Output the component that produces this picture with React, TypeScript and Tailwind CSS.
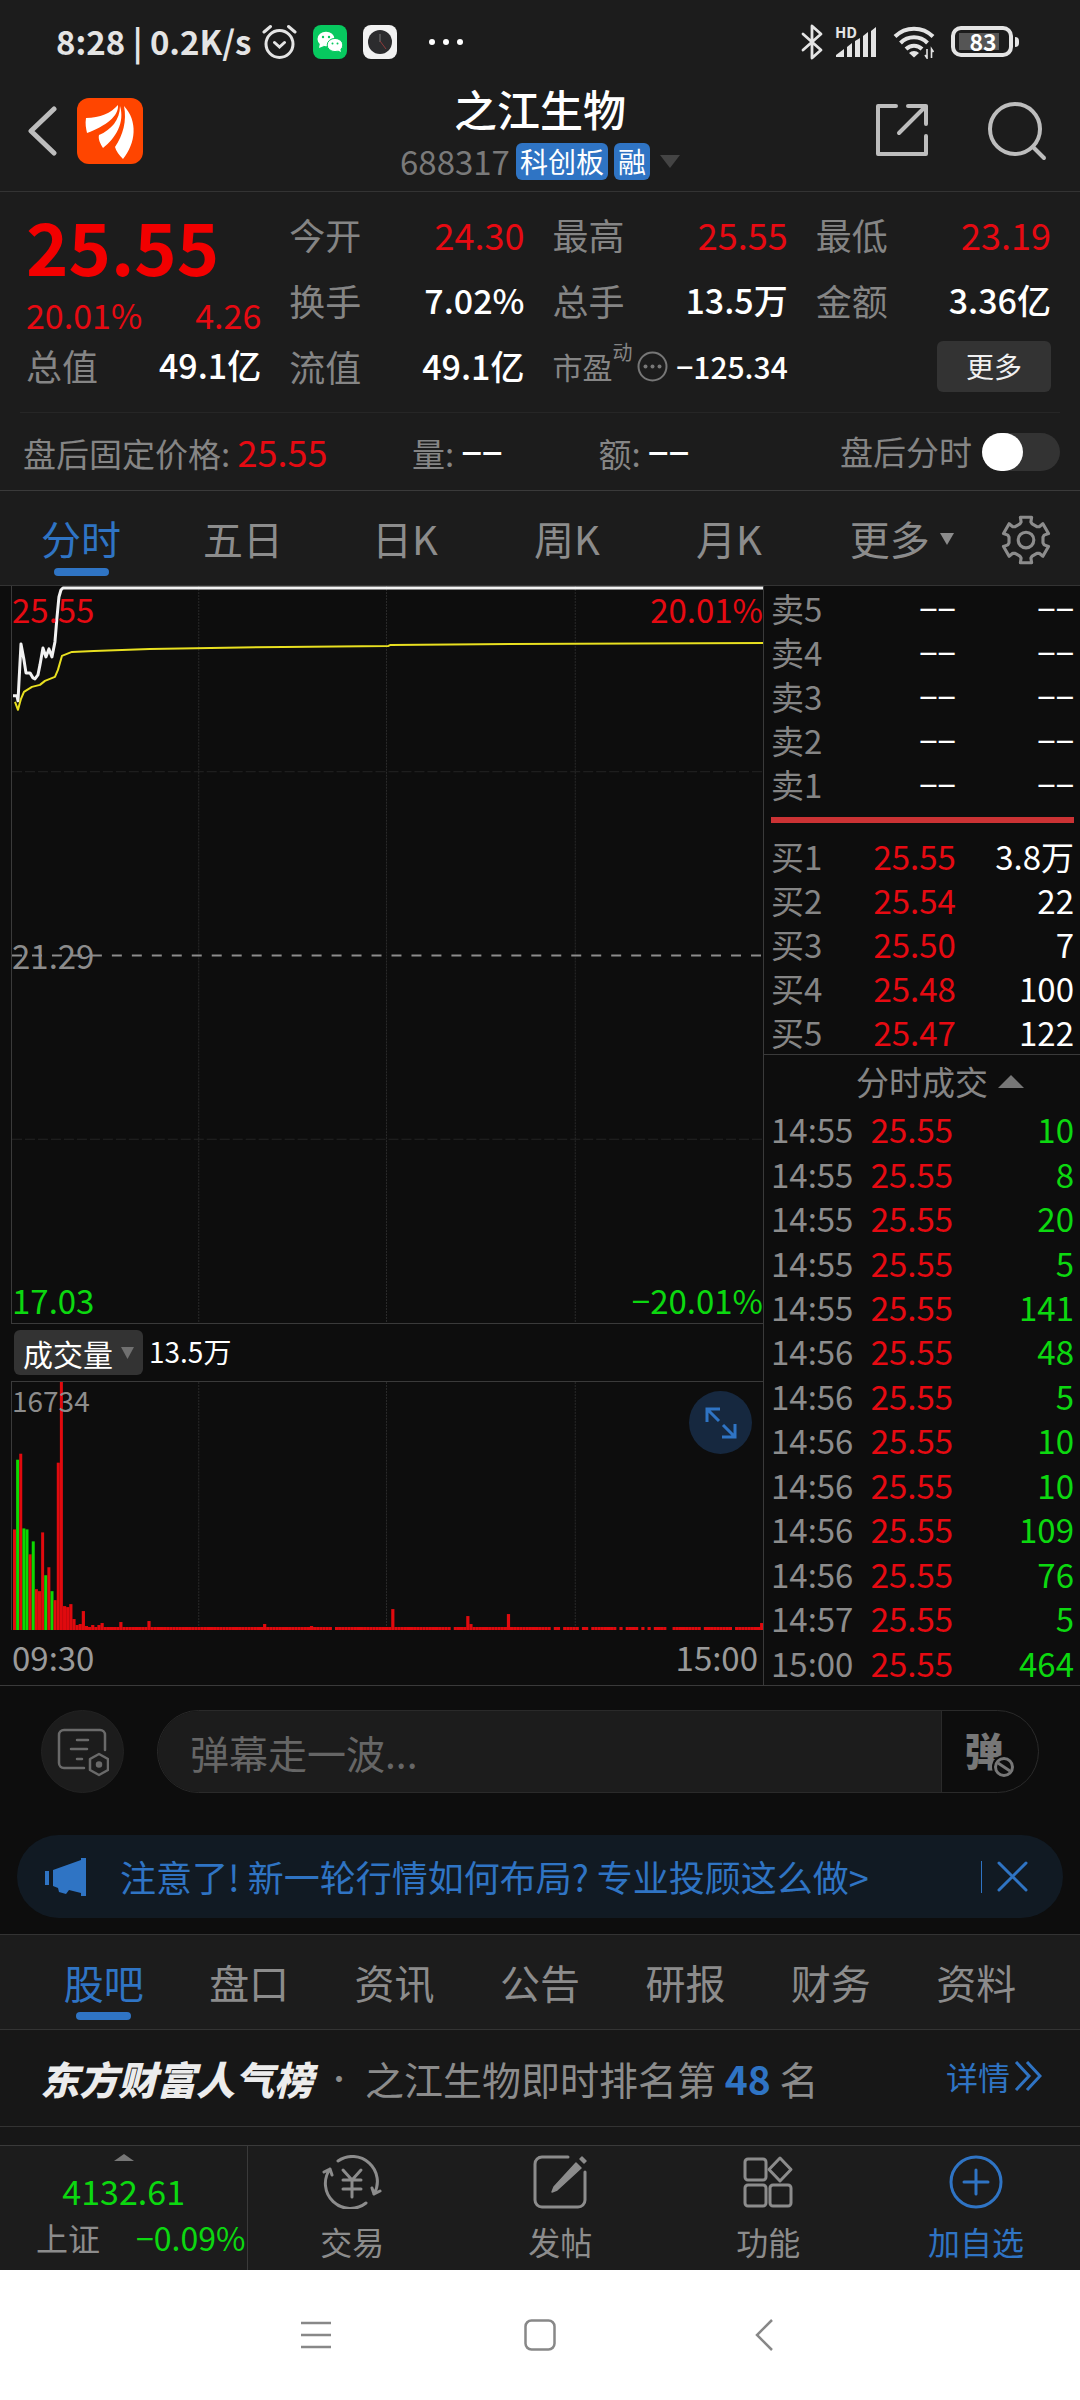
import React, { FC, ReactNode, useState } from "react";

type Tone = "red" | "green" | "white";

const toneClass: Record<Tone, string> = {
    red: "text-[#e60a12]",
    green: "text-[#0cd810]",
    white: "text-white"
};

const NONE = "−−";

const quotes: { label: string, value: string, tone: Tone }[] = [
    { label: "今开", value: "24.30", tone: "red" },
    { label: "最高", value: "25.55", tone: "red" },
    { label: "最低", value: "23.19", tone: "red" },
    { label: "换手", value: "7.02%", tone: "white" },
    { label: "总手", value: "13.5万", tone: "white" },
    { label: "金额", value: "3.36亿", tone: "white" },
    { label: "流值", value: "49.1亿", tone: "white" }
];

const periods = ["分时", "五日", "日K", "周K", "月K"];
const sections = ["股吧", "盘口", "资讯", "公告", "研报", "财务", "资料"];

interface Order {
    label: string
    price: string
    amount: string
}

const sells: Order[] = ["卖5", "卖4", "卖3", "卖2", "卖1"].map(label => ({ label, price: NONE, amount: NONE }));

const buys: Order[] = [
    { label: "买1", price: "25.55", amount: "3.8万" },
    { label: "买2", price: "25.54", amount: "22" },
    { label: "买3", price: "25.50", amount: "7" },
    { label: "买4", price: "25.48", amount: "100" },
    { label: "买5", price: "25.47", amount: "122" }
];

const trades: [string, number][] = [
    ["14:55", 10], ["14:55", 8], ["14:55", 20], ["14:55", 5], ["14:55", 141],
    ["14:56", 48], ["14:56", 5], ["14:56", 10], ["14:56", 10], ["14:56", 109], ["14:56", 76],
    ["14:57", 5], ["15:00", 464]
];

// minute volume bars, heights in chart units, anything not listed is the 3 unit floor
const openingBars = [
    101, 171, 177, 102, 101, 76, 89, 41, 39, 98, 55, 63, 39, 30, 168, 249,
    24, 23, 26, 11, 5, 6, 19, 4, 3, 5, 3, 5, 7
];
const fallingBars = [1, 3, 4, 6, 10, 12];
const laterBars: Record<number, number> = { 34: 8, 43: 9, 80: 6, 95: 4, 121: 21, 145: 14, 146: 6, 158: 16, 239: 7 };
const emptyBars = [102, 140, 172, 175, 181, 184, 193, 195, 200, 202, 204, 209, 210, 220, 230];

const StatusBar: FC = () => (
    <div className="flex h-[83px] items-center justify-between pl-14 pr-[61px] text-[#e4e4e4]">
        <div className="flex items-center">
            <span className="text-[33px] font-bold leading-none">8:28 | 0.2K/s</span>
            <svg className="ml-[11px] size-[35px]" viewBox="0 0 35 35" fill="none" stroke="currentColor" strokeWidth="3" strokeLinecap="round">
                <circle cx="17.500" cy="20" r="13.500" />
                <path d="M2 8 8.500 2.500M33 8 26.500 2.500M12.500 18.500l5 4.500 5-4.500" />
            </svg>
            <svg className="ml-4 size-[34px]" viewBox="0 0 34 34">
                <rect width="34" height="34" rx="8" fill="#07c95f" />
                <g fill="#fff">
                    <ellipse cx="13" cy="14" rx="8.500" ry="7.300" />
                    <path d="m7 18-1 5 5-2z" />
                    <ellipse cx="22" cy="20" rx="7.800" ry="6.600" stroke="#07c95f" strokeWidth="1" />
                    <path d="m24 25 4 2-1-4z" />
                </g>
                <g fill="#07c95f">
                    <circle cx="10" cy="12" r="1.200" />
                    <circle cx="16" cy="12" r="1.200" />
                    <circle cx="19.500" cy="18.500" r="1" />
                    <circle cx="24.500" cy="18.500" r="1" />
                </g>
            </svg>
            <svg className="ml-4 size-[34px]" viewBox="0 0 34 34" fill="none">
                <rect width="34" height="34" rx="8" fill="#f2f2f2" />
                <circle cx="17" cy="17" r="12" fill="#2c2c2e" />
                <path d="M17 9v8" stroke="#777" strokeWidth="1" />
                <path d="m17 16 6 8" stroke="#8d3b3b" strokeWidth="1" />
            </svg>
            <svg className="ml-8 h-2 w-[34px]" viewBox="0 0 34 8" fill="#fff">
                <circle cx="3" cy="4" r="3" />
                <circle cx="17" cy="4" r="3" />
                <circle cx="31" cy="4" r="3" />
            </svg>
        </div>
        <div className="flex items-center">
            <svg className="h-[36px] w-[22px]" viewBox="0 0 22 36" fill="none" stroke="currentColor" strokeWidth="2.800" strokeLinejoin="round" strokeLinecap="round">
                <path d="m2 10 18 16-9 8V2l9 8L2 26" />
            </svg>
            <div className="relative ml-3 h-8 w-[42px]">
                <svg className="size-full" viewBox="0 0 42 32" fill="currentColor">
                    <path d="M1 31v-2l8-6v8zM12 31V21l5-4v14zM20 31V15l5-3v19zM28 31V10l5-4v25zM36 31V5l5-4v30z" />
                </svg>
                <span className="absolute left-0 top-0 text-[15px] font-bold leading-3">HD</span>
            </div>
            <svg className="ml-4 h-[34px] w-[42px]" viewBox="0 0 42 34" fill="none" stroke="currentColor" strokeWidth="4">
                <path d="M2 11.500a27 27 0 0 1 38 0M7.500 18a19 19 0 0 1 27 0M13 24a11.500 11.500 0 0 1 16 0" />
                <path d="m16 28 5 4.500 5-4.500a7 7 0 0 0-10 0z" fill="currentColor" stroke="none" />
                <path d="M34 24v9l-2-3M38.500 33v-9l2 3" strokeWidth="1.600" />
            </svg>
            <div className="ml-4 flex items-center">
                <div className="flex h-[31px] w-[62px] items-center rounded-[10px] border-4 border-[#e4e4e4] px-1">
                    <div className="flex h-[17px] w-10 items-center justify-center bg-[#555]">
                        <span className="pl-2 text-[23px] font-bold leading-none text-white">83</span>
                    </div>
                </div>
                <div className="ml-[2px] h-[10px] w-1 rounded-r bg-[#e4e4e4]" />
            </div>
        </div>
    </div>
);

const Header: FC = () => (
    <header className="grid h-[109px] grid-cols-[1fr_auto_1fr] border-b border-[#333]">
        <div className="flex items-start pl-[26px] pt-[15px]">
            <button aria-label="返回" className="mt-2">
                <svg className="h-[50px] w-8" viewBox="0 0 32 50" fill="none" stroke="#bdbdbd" strokeWidth="5" strokeLinecap="round" strokeLinejoin="round">
                    <path d="M28 3 5 25l23 22" />
                </svg>
            </button>
            <svg className="ml-[19px] size-[66px]" viewBox="0 0 66 66">
                <rect width="66" height="66" rx="12" fill="#ff4500" />
                <g fill="#fff">
                    <path d="M9 20c14 0 25-5 32-13 1 11-12 21-31 28-1-5-2-9-1-15z" />
                    <path d="M43 8c5 16-4 32-17 42-3-5-5-9-4-13 12-5 21-15 21-29z" />
                    <path d="M47 8c14 15 12 37-1 53-4-4-7-8-8-12 8-12 12-26 9-41z" />
                </g>
            </svg>
        </div>
        <div className="flex flex-col items-center">
            <h1 className="text-[43px] font-medium leading-[50px] text-white">之江生物</h1>
            <button className="mt-[10px] flex h-[37px] items-center">
                <span className="text-[33px] leading-[37px] text-[#7a7a7a]">688317</span>
                <span className="ml-[6px] rounded-md bg-[#2f74c4] px-1 text-[28px] leading-[37px] text-white">科创板</span>
                <span className="ml-[6px] rounded-md bg-[#2f74c4] px-1 text-[28px] leading-[37px] text-white">融</span>
                <svg className="ml-[10px] h-[13px] w-5" viewBox="0 0 20 13" fill="#444"><path d="M0 0h20L10 13z" /></svg>
            </button>
        </div>
        <div className="flex items-start justify-end gap-[58px] pr-[33px] pt-[18px]">
            <button aria-label="分享" className="pt-[2px]">
                <svg className="size-[54px]" viewBox="0 0 54 54" fill="none" stroke="#bdbdbd" strokeWidth="4" strokeLinecap="round" strokeLinejoin="round">
                    <path d="M21 3H3v48h48V33M33 3h18v18M51 3 24 30" />
                </svg>
            </button>
            <button aria-label="搜索">
                <svg className="size-[60px]" viewBox="0 0 60 60" fill="none" stroke="#bdbdbd" strokeWidth="4" strokeLinecap="round">
                    <circle cx="28" cy="28" r="25" />
                    <path d="m46 46 11 11" />
                </svg>
            </button>
        </div>
    </header>
);

interface IQuoteCell {
    label: string
    value: string
    tone: Tone
}

const QuoteCell: FC<IQuoteCell> = ({ label, value, tone }) => (
    <div className="flex items-center justify-between">
        <span className="text-[#858585]">{label}</span>
        <span className={`${toneClass[tone]} ${tone === "white" ? "text-[34px] font-medium" : ""}`}>{value}</span>
    </div>
);

const QuotePanel: FC = () => (
    <section className="grid grid-cols-4 gap-x-7 pb-[13px] pl-[26px] pr-[29px] pt-[9px] text-[36px] leading-none">
        <div className="flex flex-col">
            <div className="flex h-[88px] items-center text-[72px] font-bold text-[#f20000]">25.55</div>
            <div className="flex h-[52px] items-center justify-between text-[34px] text-[#e60a12]">
                <span>20.01%</span>
                <span>4.26</span>
            </div>
            <div className="grid h-12">
                <QuoteCell label="总值" value="49.1亿" tone="white" />
            </div>
        </div>
        <div className="col-span-3 grid auto-rows-[66px] grid-cols-3 gap-x-7">
            {quotes.map(quote => <QuoteCell key={quote.label} {...quote} />)}
            <div className="flex items-center justify-between text-[30px]">
                <span className="flex items-center text-[#858585]">
                    市盈
                    <span className="mb-7 text-[20px] leading-none">动</span>
                    <svg className="ml-1 size-[31px]" viewBox="0 0 31 31" fill="none" stroke="#777" strokeWidth="2">
                        <circle cx="15.500" cy="15.500" r="14" />
                        <g fill="#777" stroke="none">
                            <circle cx="8.500" cy="15.500" r="2" />
                            <circle cx="15.500" cy="15.500" r="2" />
                            <circle cx="22.500" cy="15.500" r="2" />
                        </g>
                    </svg>
                </span>
                <span className="font-medium text-white">−125.34</span>
            </div>
            <div className="flex items-center justify-end">
                <button className="h-[51px] w-[114px] rounded-md bg-[#333] text-[28px] text-[#f0f0f0]">更多</button>
            </div>
        </div>
    </section>
);

const AfterHours: FC = () => {

    const [enabled, setEnabled] = useState<boolean>(false);

    return (
        <section className="flex h-[78px] items-center border-b border-[#3a3a3a] pl-[23px] pr-5 text-[33px] leading-none text-[#858585]">
            <span className="w-3/8">盘后固定价格: <span className="text-[36px] text-[#e60a12]">25.55</span></span>
            <span className="w-[18%]">量: <span className="text-[36px] font-medium text-white">{NONE}</span></span>
            <span>额: <span className="text-[36px] font-medium text-white">{NONE}</span></span>
            <label className="ml-auto flex items-center gap-[10px]">
                盘后分时
                <input
                    type="checkbox"
                    role="switch"
                    className="peer sr-only"
                    checked={enabled}
                    onChange={(e) => setEnabled(e.target.checked)}
                />
                <span className="flex h-[38px] w-[78px] rounded-full bg-[#333] peer-checked:justify-end">
                    <span className="h-[38px] w-[41px] rounded-full bg-white" />
                </span>
            </label>
        </section>
    );
}

interface ITab {
    active: boolean
    onClick: () => void
    className?: string
    children: ReactNode
}

const Tab: FC<ITab> = ({ active, onClick, className, children }) => (
    <button
        onClick={onClick}
        className={`flex flex-col items-center pt-[22px] text-[40px] leading-[50px] ${active ? "text-[#2f74c4]" : "text-[#8c8c8c]"} ${className}`}
    >
        {children}
        {active && <span className="mt-[5px] h-2 w-[55px] rounded-full bg-[#2f74c4]" />}
    </button>
);

// outline of a six toothed gear around 24,24
const gearPoints = [0, 60, 120, 180, 240, 300].flatMap(base =>
    [[-21, 16.5], [-15, 18], [-14, 22.5], [14, 22.5], [15, 18], [21, 16.5]].map(([offset, radius]) => {
        const angle = (base + offset - 90) * Math.PI / 180;
        return `${(24 + radius * Math.cos(angle)).toFixed(1)},${(24 + radius * Math.sin(angle)).toFixed(1)}`;
    })
).join(" ");

const PeriodTabs: FC = () => {

    const [period, setPeriod] = useState<string>("分时");

    return (
        <nav className="flex h-[95px] border-b border-[#333]">
            {periods.map(name => (
                <Tab key={name} className="w-[15%]" active={name === period} onClick={() => setPeriod(name)}>{name}</Tab>
            ))}
            <button className="flex w-[17%] justify-center gap-[10px] pt-[22px] text-[40px] leading-[50px] text-[#8c8c8c]">
                更多
                <svg className="mt-5 h-3 w-[14px]" viewBox="0 0 14 12" fill="#8c8c8c"><path d="M0 0h14L7 12z" /></svg>
            </button>
            <button aria-label="设置" className="flex flex-1 justify-center pr-[22px] pt-6">
                <svg className="size-[50px]" viewBox="0 0 48 48" fill="none" stroke="#8c8c8c" strokeWidth="3" strokeLinejoin="round">
                    <polygon points={gearPoints} />
                    <circle cx="24" cy="24" r="7.500" />
                </svg>
            </button>
        </nav>
    );
}

const PriceChart: FC = () => (
    <div className="relative ml-[11px] h-[738px] border-b border-l border-[#3a3a3a] text-[33px] leading-[46px]">
        <svg className="size-full" viewBox="0 0 752 738" preserveAspectRatio="none" fill="none">
            <path d="M187 0v738M375 0v738M564 0v738" stroke="#2a2a2a" strokeDasharray="2 1" />
            <path d="M0 186h752M0 554h752" stroke="#242424" strokeDasharray="10 3" />
            <path d="M0 370h752" stroke="#8c8c8c" strokeWidth="2" strokeDasharray="10 10" />
            <path
                d="M1 110 5 110 6 115 9 58 12 74 14 87 18 87 21 92 23 93 26 89 28 79 31 62 34 71 37 63 40 71 43 56 45 32 47 11 49 4 51 2H752"
                stroke="#f2f2f2" strokeWidth="3" strokeLinejoin="round"
            />
            <path
                d="M3 116 6 124 9 113 12 106 20 101 28 99 33 95 43 91 46 84 50 70 60 66 82 65 138 63 272 61 377 60 379 59 500 58 752 57"
                stroke="#e8e020" strokeWidth="2" strokeLinejoin="round"
            />
        </svg>
        <span className="absolute left-0 top-0 text-[#e60a12]">25.55</span>
        <span className="absolute right-0 top-0 text-[#e60a12]">20.01%</span>
        <span className="absolute left-0 top-[346px] text-[#8c8c8c]">21.29</span>
        <span className="absolute bottom-0 left-0 text-[#0cd810]">17.03</span>
        <span className="absolute bottom-0 right-0 text-[#0cd810]">−20.01%</span>
    </div>
);

const VolumeChart: FC = () => {

    const bars = Array.from({ length: 240 }, (_, i) => {
        if (emptyBars.includes(i)) {
            return null;
        }
        const height = openingBars[i] ?? laterBars[i] ?? 3;
        const width = fallingBars.includes(i) || i < 16 ? 3 : 3.2;
        return (
            <rect
                key={i}
                x={i * 3.13 + 1}
                y={249 - height}
                width={width}
                height={height}
                fill={fallingBars.includes(i) ? "#0cd800" : "#e00a0e"}
            />
        );
    });

    return (
        <div className="relative ml-[11px] h-[249px] border-l border-t border-[#3a3a3a]">
            <svg className="size-full" viewBox="0 0 752 249" preserveAspectRatio="none" fill="none">
                <path d="M187 0v249M375 0v249M564 0v249" stroke="#2a2a2a" strokeDasharray="2 1" />
                {bars}
            </svg>
            <span className="absolute left-0 top-0 text-[28px] leading-9 text-[#8c8c8c]">16734</span>
            <button aria-label="全屏" className="absolute right-[11px] top-[9px] flex size-[63px] items-center justify-center rounded-full bg-[#16283f]">
                <svg className="size-8" viewBox="0 0 32 32" fill="none" stroke="#2f74c4" strokeWidth="3">
                    <path d="M15 2H2v13M2 2l12 12M17 30h13V17M30 30 18 18" />
                </svg>
            </button>
        </div>
    );
}

const ChartColumn: FC = () => (
    <div className="min-w-0 flex-1">
        <PriceChart />
        <div className="flex h-[57px] items-center pl-[14px]">
            <button className="flex h-[45px] items-center rounded-md bg-[#333] px-[9px] text-[30px] leading-none text-white">
                成交量
                <svg className="ml-2 h-3 w-[13px]" viewBox="0 0 13 12" fill="#707070"><path d="M0 0h13L6.500 12z" /></svg>
            </button>
            <span className="ml-[6px] pb-1 text-[28px] leading-none text-white">13.5万</span>
        </div>
        <VolumeChart />
        <div className="flex h-[55px] items-center justify-between pl-3 pr-[5px] text-[33px] leading-none text-[#9a9a9a]">
            <span>09:30</span>
            <span>15:00</span>
        </div>
    </div>
);

interface IOrderTable {
    orders: Order[]
    priceTone: Tone
}

const OrderTable: FC<IOrderTable> = ({ orders, priceTone }) => (
    <table className="w-full leading-[44px]">
        <tbody>
            {orders.map(order => (
                <tr key={order.label}>
                    <th scope="row" className="w-[28%] p-0 text-left font-normal text-[#858585]">{order.label}</th>
                    <td className={`w-[33%] p-0 text-right ${toneClass[priceTone]}`}>{order.price}</td>
                    <td className="p-0 text-right text-white">{order.amount}</td>
                </tr>
            ))}
        </tbody>
    </table>
);

const OrderColumn: FC = () => (
    <aside className="flex w-[317px] flex-col border-l border-[#3a3a3a] text-[33px]">
        <div className="border-b border-[#3a3a3a] pl-[7px] pr-[6px]">
            <OrderTable orders={sells} priceTone="white" />
            <div className="my-[11px] h-[6px] bg-[#cb3234]" />
            <OrderTable orders={buys} priceTone="red" />
        </div>
        <button className="flex h-[52px] items-center justify-center gap-[10px] pl-9 leading-none text-[#858585]">
            分时成交
            <svg className="h-[13px] w-[26px]" viewBox="0 0 26 13" fill="#777"><path d="M0 13h26L13 0z" /></svg>
        </button>
        <table className="mr-[6px] h-[578px] flex-1 leading-[44px]">
            <tbody>
                {trades.map(([time, amount], index) => (
                    <tr key={index}>
                        <td className="w-[29%] p-0 pl-[7px] text-left text-[#8c8c8c]">{time}</td>
                        <td className="w-[32%] p-0 text-right text-[#e60a12]">25.55</td>
                        <td className="p-0 text-right text-[#0cd810]">{amount}</td>
                    </tr>
                ))}
            </tbody>
        </table>
    </aside>
);

const CommentBar: FC = () => {

    const [comment, setComment] = useState<string>("");

    return (
        <div className="flex items-center gap-[33px] pl-[41px] pr-[41px] pt-6">
            <button aria-label="弹幕设置" className="flex size-[83px] shrink-0 items-center justify-center rounded-full border border-[#222] bg-[#1c1c1c]">
                <svg className="size-[52px]" viewBox="0 0 52 52" fill="none" stroke="#6a6a6a" strokeWidth="2.500" strokeLinecap="round">
                    <path d="M27 42H7a5 5 0 0 1-5-5V9a5 5 0 0 1 5-5h36a5 5 0 0 1 5 5v15M20 14h11M14 23h16M20 33h5" />
                    <path d="m42 28 9 5v11l-9 5-9-5V33z" strokeLinejoin="round" />
                    <circle cx="42" cy="38.500" r="2" fill="#6a6a6a" />
                </svg>
            </button>
            <div className="flex h-[83px] flex-1 overflow-hidden rounded-full border border-[#2a2a2a]">
                <input
                    className="min-w-0 flex-1 bg-[#1c1c1c] px-8 text-[39px] leading-none text-[#bbb] placeholder:text-[#666]"
                    type="text"
                    aria-label="弹幕"
                    placeholder="弹幕走一波..."
                    value={comment}
                    onChange={(e) => setComment(e.target.value)}
                />
                <button aria-label="关闭弹幕" className="relative w-[97px] border-l border-[#2a2a2a] pb-1 pr-3 text-[39px] font-black leading-none text-[#777]">
                    弹
                    <svg className="absolute left-[50px] top-[44px] size-6" viewBox="0 0 24 24" fill="#0d0d0d">
                        <circle cx="12" cy="12" r="12" />
                        <g fill="none" stroke="#777" strokeWidth="3">
                            <circle cx="12" cy="12" r="8.500" />
                            <path d="m6 8 12 8" />
                        </g>
                    </svg>
                </button>
            </div>
        </div>
    );
}

const Notice: FC = () => (
    <div className="mx-[17px] mb-4 mt-[42px] flex h-[83px] items-center rounded-full bg-[#111a23] pl-7 pr-[35px] text-[#2f74c4]">
        <svg className="h-[38px] w-[42px]" viewBox="0 0 42 38" fill="currentColor">
            <path d="M0 13h4v14H0zM8 12l28-10V0h5v38h-5v-3l-12-3-3 4-7-2-1-4-5-2z" />
        </svg>
        <a href="#notice" className="ml-[33px] pb-[2px] text-[36px] leading-none">注意了! 新一轮行情如何布局? 专业投顾这么做&gt;</a>
        <span className="ml-auto h-8 w-px bg-[#2f74c4]" />
        <button aria-label="关闭" className="ml-[15px]">
            <svg className="size-[31px]" viewBox="0 0 31 31" fill="none" stroke="currentColor" strokeWidth="3" strokeLinecap="round">
                <path d="m2 2 27 27M29 2 2 29" />
            </svg>
        </button>
    </div>
);

const SectionTabs: FC = () => {

    const [section, setSection] = useState<string>("股吧");

    return (
        <nav className="flex h-24 border-y border-[#333] bg-[#1c1c1c] px-[31px]">
            {sections.map(name => (
                <Tab key={name} className="flex-1" active={name === section} onClick={() => setSection(name)}>{name}</Tab>
            ))}
        </nav>
    );
}

const RankRow: FC = () => (
    <div className="mb-[17px] flex h-[97px] items-center border-b border-[#333] pl-10 pr-[38px] text-[39px] leading-none text-[#8c8c8c]">
        <span className="font-black italic text-[#ececec]">东方财富人气榜</span>
        <span className="w-[52px] text-center text-[28px]">·</span>
        <span>之江生物即时排名第 <span className="font-bold text-[#2f74c4]">48</span> 名</span>
        <a href="#rank" className="ml-auto flex items-center gap-1 pb-1 text-[32px] text-[#2f74c4]">
            详情
            <svg className="h-[30px] w-7" viewBox="0 0 28 30" fill="none" stroke="currentColor" strokeWidth="3">
                <path d="m2 1 13 14L2 29M13 1l13 14-13 14" />
            </svg>
        </a>
    </div>
);

interface IAction {
    label: string
    highlight?: boolean
    children: ReactNode
}

const Action: FC<IAction> = ({ label, highlight, children }) => (
    <button className={`flex flex-1 flex-col items-center pt-[9px] text-[32px] leading-10 ${highlight ? "text-[#2f74c4]" : "text-[#8c8c8c]"}`}>
        <svg className="mb-3 h-[54px] w-[60px]" viewBox="0 0 60 54" fill="none" stroke="currentColor" strokeWidth="3" strokeLinecap="round" strokeLinejoin="round">
            {children}
        </svg>
        {label}
    </button>
);

const BottomBar: FC = () => (
    <footer className="flex h-[125px] border-t border-[#3a3a3a] bg-[#1c1c1c]">
        <button className="flex w-[23%] flex-col items-center border-r border-[#3a3a3a] pt-2 leading-none">
            <svg className="h-[7px] w-5" viewBox="0 0 20 7" fill="#777"><path d="M0 7h20L10 0z" /></svg>
            <span className="mt-3 text-[34px] leading-[36px] text-[#0cd810]">4132.61</span>
            <span className="mt-3 flex w-full justify-between pl-9 pr-[2px] text-[32px] leading-[32px]">
                <span className="text-[#8c8c8c]">上证</span>
                <span className="text-[#0cd810]">−0.09%</span>
            </span>
        </button>
        <Action label="交易">
            <path d="M16 6a25 25 0 0 1 36 33M52 39l6-3M52 39l-2-6" />
            <path d="M44 48A25 25 0 0 1 8 14M8 14l-6 3M8 14l2 6" />
            <path d="m21 15 9 10 9-10M30 25v17M21 25h18M21 34h18" />
        </Action>
        <Action label="发帖">
            <path d="M38 2H12a7 7 0 0 0-7 7v36a7 7 0 0 0 7 7h36a7 7 0 0 0 7-7V17" />
            <path d="m46 8 5 5-24 22-5 2 2-5zM50 4l2-2 4 4-2 2z" fill="currentColor" strokeWidth="1.500" />
        </Action>
        <Action label="功能">
            <rect x="7" y="4" width="21" height="21" rx="3" />
            <rect x="7" y="30" width="21" height="21" rx="3" />
            <rect x="32" y="30" width="21" height="21" rx="3" />
            <path d="m42 3 11 11.500L42 26 31 14.500z" />
        </Action>
        <Action label="加自选" highlight>
            <circle cx="30" cy="27" r="25" />
            <path d="M30 15v24M18 27h24" />
        </Action>
    </footer>
);

const SystemNav: FC = () => (
    <div className="flex h-[130px] items-center justify-center bg-white">
        <button aria-label="最近任务" className="flex w-56 justify-center">
            <svg className="size-8" viewBox="0 0 32 32" stroke="#888" strokeWidth="2.500"><path d="M1 4h30M1 16h30M1 28h30" /></svg>
        </button>
        <button aria-label="主页" className="flex w-56 justify-center">
            <svg className="size-8" viewBox="0 0 32 32" fill="none" stroke="#888" strokeWidth="2.500"><rect x="1.500" y="1.500" width="29" height="29" rx="6" /></svg>
        </button>
        <button aria-label="后退" className="flex w-56 justify-center">
            <svg className="h-8 w-5" viewBox="0 0 20 32" fill="none" stroke="#888" strokeWidth="2.500"><path d="M18 1 3 16l15 15" /></svg>
        </button>
    </div>
);

const App: FC = () => {
    return (
        <div className="bg-[#0d0d0d] font-['Noto_Sans_CJK_SC',sans-serif]">
            <div className="bg-[#1c1c1c]">
                <StatusBar />
                <Header />
                <QuotePanel />
                <div className="mx-5 h-px bg-[#262626]" />
                <AfterHours />
                <PeriodTabs />
            </div>
            <main>
                <div className="flex border-b border-[#3a3a3a]">
                    <ChartColumn />
                    <OrderColumn />
                </div>
                <CommentBar />
                <Notice />
                <SectionTabs />
                <div className="bg-[#171717] pb-px">
                    <RankRow />
                </div>
            </main>
            <BottomBar />
            <SystemNav />
        </div>
    );
}

export default App;
